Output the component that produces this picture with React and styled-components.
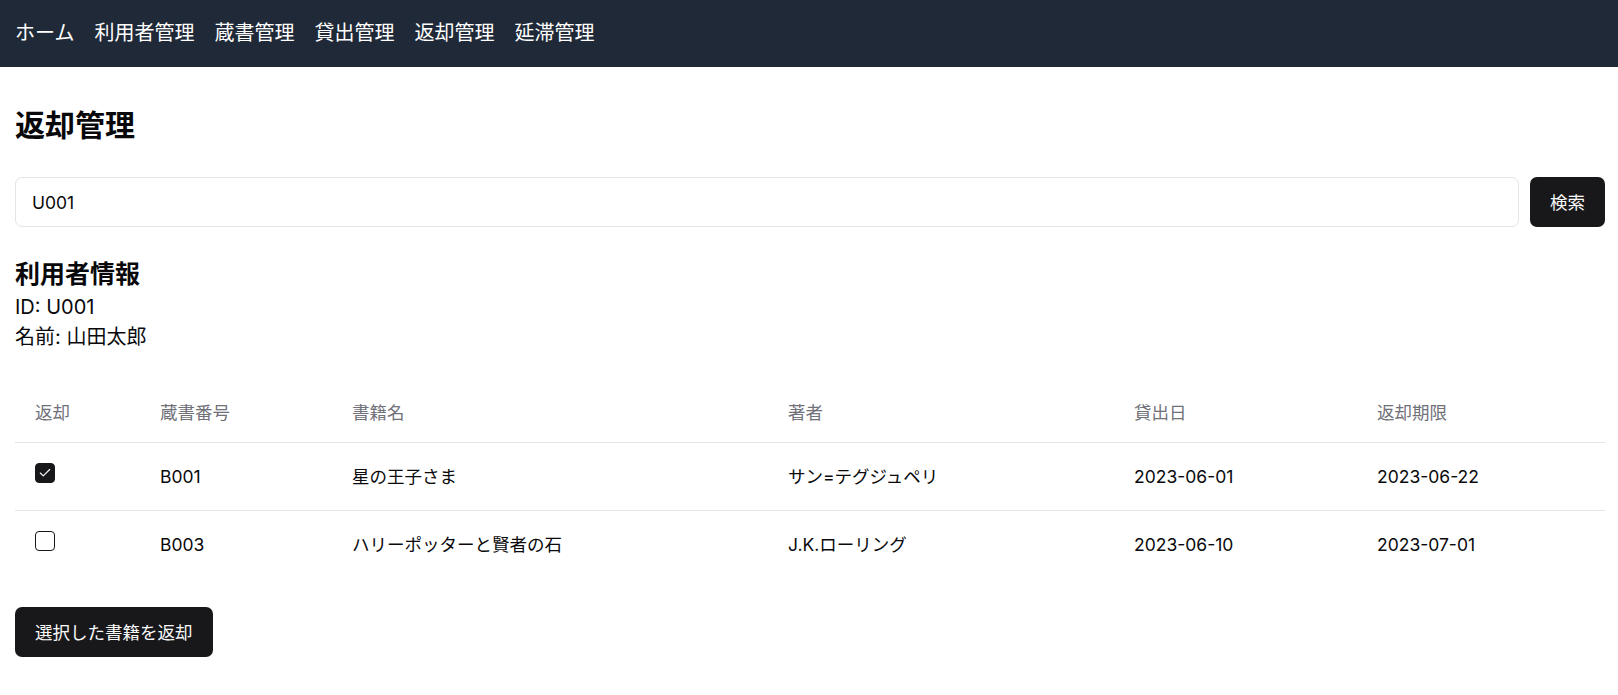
import React, { useState } from "react";
import styled, { createGlobalStyle } from "styled-components";

const GlobalStyle = createGlobalStyle`
  html, body { margin: 0; padding: 0; background: #ffffff; }
  body {
    font-family: Inter, "Noto Sans CJK JP", "Noto Sans", sans-serif;
    color: #09090b;
  }
  * { box-sizing: border-box; }
`;

const NavBar = styled.nav`
  height: 67px;
  background: #1f2937;
  display: flex;
  align-items: center;
  gap: 20px;
  padding: 0 15px 2px;
`;

const NavLink = styled.a`
  color: #ffffff;
  font-size: 20px;
  line-height: 30px;
  text-decoration: none;
  cursor: pointer;
`;

const Main = styled.main`
  padding: 38px 13px 0 15px;
`;

const Title = styled.h1`
  margin: 0 0 32px;
  font-size: 30px;
  line-height: 40px;
  font-weight: 700;
`;

const SearchRow = styled.div`
  display: flex;
  gap: 11px;
  height: 50px;
`;

const SearchInput = styled.input`
  flex: 1;
  height: 50px;
  border: 1px solid #e4e4e7;
  border-radius: 7px;
  padding: 0 16px;
  font-family: inherit;
  font-size: 17.5px;
  color: #09090b;
  outline: none;
`;

const DarkButton = styled.button`
  height: 50px;
  padding: 0 ${(p) => p.$px || 20}px;
  background: #18181b;
  color: #fafafa;
  border: none;
  border-radius: 7px;
  font-family: inherit;
  font-size: 17.5px;
  line-height: 25px;
  cursor: pointer;
  white-space: nowrap;
`;

const InfoSection = styled.section`
  margin-top: 30px;
`;

const InfoHeading = styled.h2`
  margin: 0;
  font-size: 25px;
  line-height: 35px;
  font-weight: 700;
`;

const InfoLine = styled.p`
  margin: 0;
  font-size: 20px;
  line-height: 30px;
`;

const Table = styled.table`
  margin-top: 30px;
  width: 100%;
  border-collapse: collapse;
  table-layout: fixed;
  font-size: 17.5px;
`;

const HeadCell = styled.th`
  height: 60px;
  padding: 0 20px;
  text-align: left;
  vertical-align: middle;
  font-weight: 400;
  color: #71717a;
  border-bottom: 1px solid #e4e4e7;
`;

const Row = styled.tr`
  border-bottom: ${(p) => (p.$last ? "none" : "1px solid #e4e4e7")};
`;

const Cell = styled.td`
  height: 68px;
  padding: 0 20px;
  vertical-align: middle;
  line-height: 25px;
  color: #09090b;
`;

const CheckBox = styled.button`
  display: flex;
  align-items: center;
  justify-content: center;
  width: 20px;
  height: 20px;
  padding: 0;
  margin-bottom: 7px;
  border-radius: 4px;
  border: 1.25px solid #18181b;
  background: ${(p) => (p.$checked ? "#18181b" : "#ffffff")};
  cursor: pointer;
`;

const Footer = styled.div`
  margin-top: 29px;
`;

const columns = [
  { label: "返却", width: 125 },
  { label: "蔵書番号", width: 192 },
  { label: "書籍名", width: 436 },
  { label: "著者", width: 346 },
  { label: "貸出日", width: 243 },
  { label: "返却期限", width: 248 },
];

const loans = [
  { id: "B001", title: "星の王子さま", author: "サン=テグジュペリ", lent: "2023-06-01", due: "2023-06-22" },
  { id: "B003", title: "ハリーポッターと賢者の石", author: "J.K.ローリング", lent: "2023-06-10", due: "2023-07-01" },
];

const CheckIcon = () => (
  <svg width="14" height="14" viewBox="0 0 24 24" fill="none" stroke="#fafafa" strokeWidth="2" strokeLinecap="round" strokeLinejoin="round">
    <path d="M20 6 9 17l-5-5" />
  </svg>
);

export default function App() {
  const [checked, setChecked] = useState({ B001: true, B003: false });
  const toggle = (id) => setChecked((c) => ({ ...c, [id]: !c[id] }));

  return (
    <>
      <GlobalStyle />
      <NavBar>
        {["ホーム", "利用者管理", "蔵書管理", "貸出管理", "返却管理", "延滞管理"].map((n) => (
          <NavLink key={n}>{n}</NavLink>
        ))}
      </NavBar>
      <Main>
        <Title>返却管理</Title>
        <SearchRow>
          <SearchInput defaultValue="U001" />
          <DarkButton $px={20}>検索</DarkButton>
        </SearchRow>
        <InfoSection>
          <InfoHeading>利用者情報</InfoHeading>
          <InfoLine>ID: U001</InfoLine>
          <InfoLine>名前: 山田太郎</InfoLine>
        </InfoSection>
        <Table>
          <colgroup>
            {columns.map((c) => (
              <col key={c.label} style={{ width: c.width }} />
            ))}
          </colgroup>
          <thead>
            <tr>
              {columns.map((c) => (
                <HeadCell key={c.label}>{c.label}</HeadCell>
              ))}
            </tr>
          </thead>
          <tbody>
            {loans.map((l, i) => (
              <Row key={l.id} $last={i === loans.length - 1}>
                <Cell>
                  <CheckBox $checked={checked[l.id]} onClick={() => toggle(l.id)}>
                    {checked[l.id] && <CheckIcon />}
                  </CheckBox>
                </Cell>
                <Cell>{l.id}</Cell>
                <Cell>{l.title}</Cell>
                <Cell>{l.author}</Cell>
                <Cell>{l.lent}</Cell>
                <Cell>{l.due}</Cell>
              </Row>
            ))}
          </tbody>
        </Table>
        <Footer>
          <DarkButton $px={20}>選択した書籍を返却</DarkButton>
        </Footer>
      </Main>
    </>
  );
}
